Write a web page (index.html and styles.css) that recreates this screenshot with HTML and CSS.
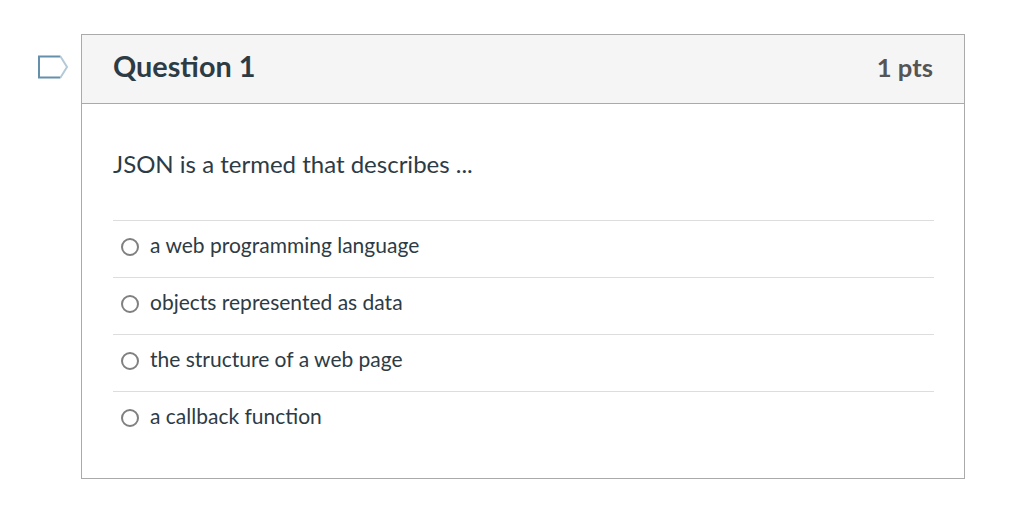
FILE: index.html
```html
<!DOCTYPE html>
<html lang="en">
<head>
<meta charset="utf-8">
<title>Question 1</title>
<link rel="stylesheet" href="styles.css">
</head>
<body>
<main class="quiz">
  <svg class="flag" width="32" height="24" viewBox="0 0 32 24" aria-hidden="true">
    <path d="M23.5 1.5 H2 V22.5 H23.5" fill="none" stroke="#6590ab" stroke-width="2"/>
    <path d="M23.5 1.5 L30 12 L23.5 22.5" fill="none" stroke="#b4cad8" stroke-width="2"/>
  </svg>
  <section class="card">
    <header class="card-head">
      <h2 class="title">Question 1</h2>
      <span class="pts">1 pts</span>
    </header>
    <div class="card-body">
      <p class="prompt">JSON is a termed that describes ...</p>
      <ul class="answers">
        <li class="answer"><span class="radio"></span>a web programming language</li>
        <li class="answer"><span class="radio"></span>objects represented as data</li>
        <li class="answer"><span class="radio"></span>the structure of a web page</li>
        <li class="answer"><span class="radio"></span>a callback function</li>
      </ul>
    </div>
  </section>
</main>
</body>
</html>
```
FILE: styles.css
```css
* { box-sizing: border-box; }
html, body { margin: 0; background: #fff; }
body {
  font-family: Lato, "Liberation Sans", sans-serif;
  color: #2d3b45;
  font-variant-ligatures: common-ligatures;
}
.quiz {
  display: flex;
  align-items: flex-start;
  padding: 34px 56px 0 37px;
  width: 1021px;
}
.flag { flex: none; margin: 21px 12px 0 0; }
.card {
  flex: none;
  width: 884px;
  height: 445px;
  border: 1px solid #aaa;
}
.card-head {
  display: flex;
  justify-content: space-between;
  align-items: center;
  height: 69px;
  padding: 0 31px 0 31px;
  background: #f5f5f5;
  border-bottom: 1px solid #aaa;
}
.title { margin: 0 0 6px; font-size: 28.8px; font-weight: 700; line-height: 34px; }
.pts { margin-bottom: 4px; font-size: 25.6px; font-weight: 700; line-height: 30px; color: #555; }
.card-body { padding: 0 30px 0 31px; }
.prompt { margin: 0; padding-top: 46px; height: 116px; font-size: 24px; line-height: 28px; }
.answers { list-style: none; margin: 0; padding: 0; }
.answer {
  display: flex;
  align-items: center;
  height: 57px;
  padding: 0 0 9px 8px;
  border-top: 1px solid #ddd;
  font-size: 21px;
  line-height: 26px;
}
.radio {
  flex: none;
  width: 18px;
  height: 18px;
  margin: 4px 11px 0 0;
  border: 2px solid #808080;
  border-radius: 50%;
}
```
